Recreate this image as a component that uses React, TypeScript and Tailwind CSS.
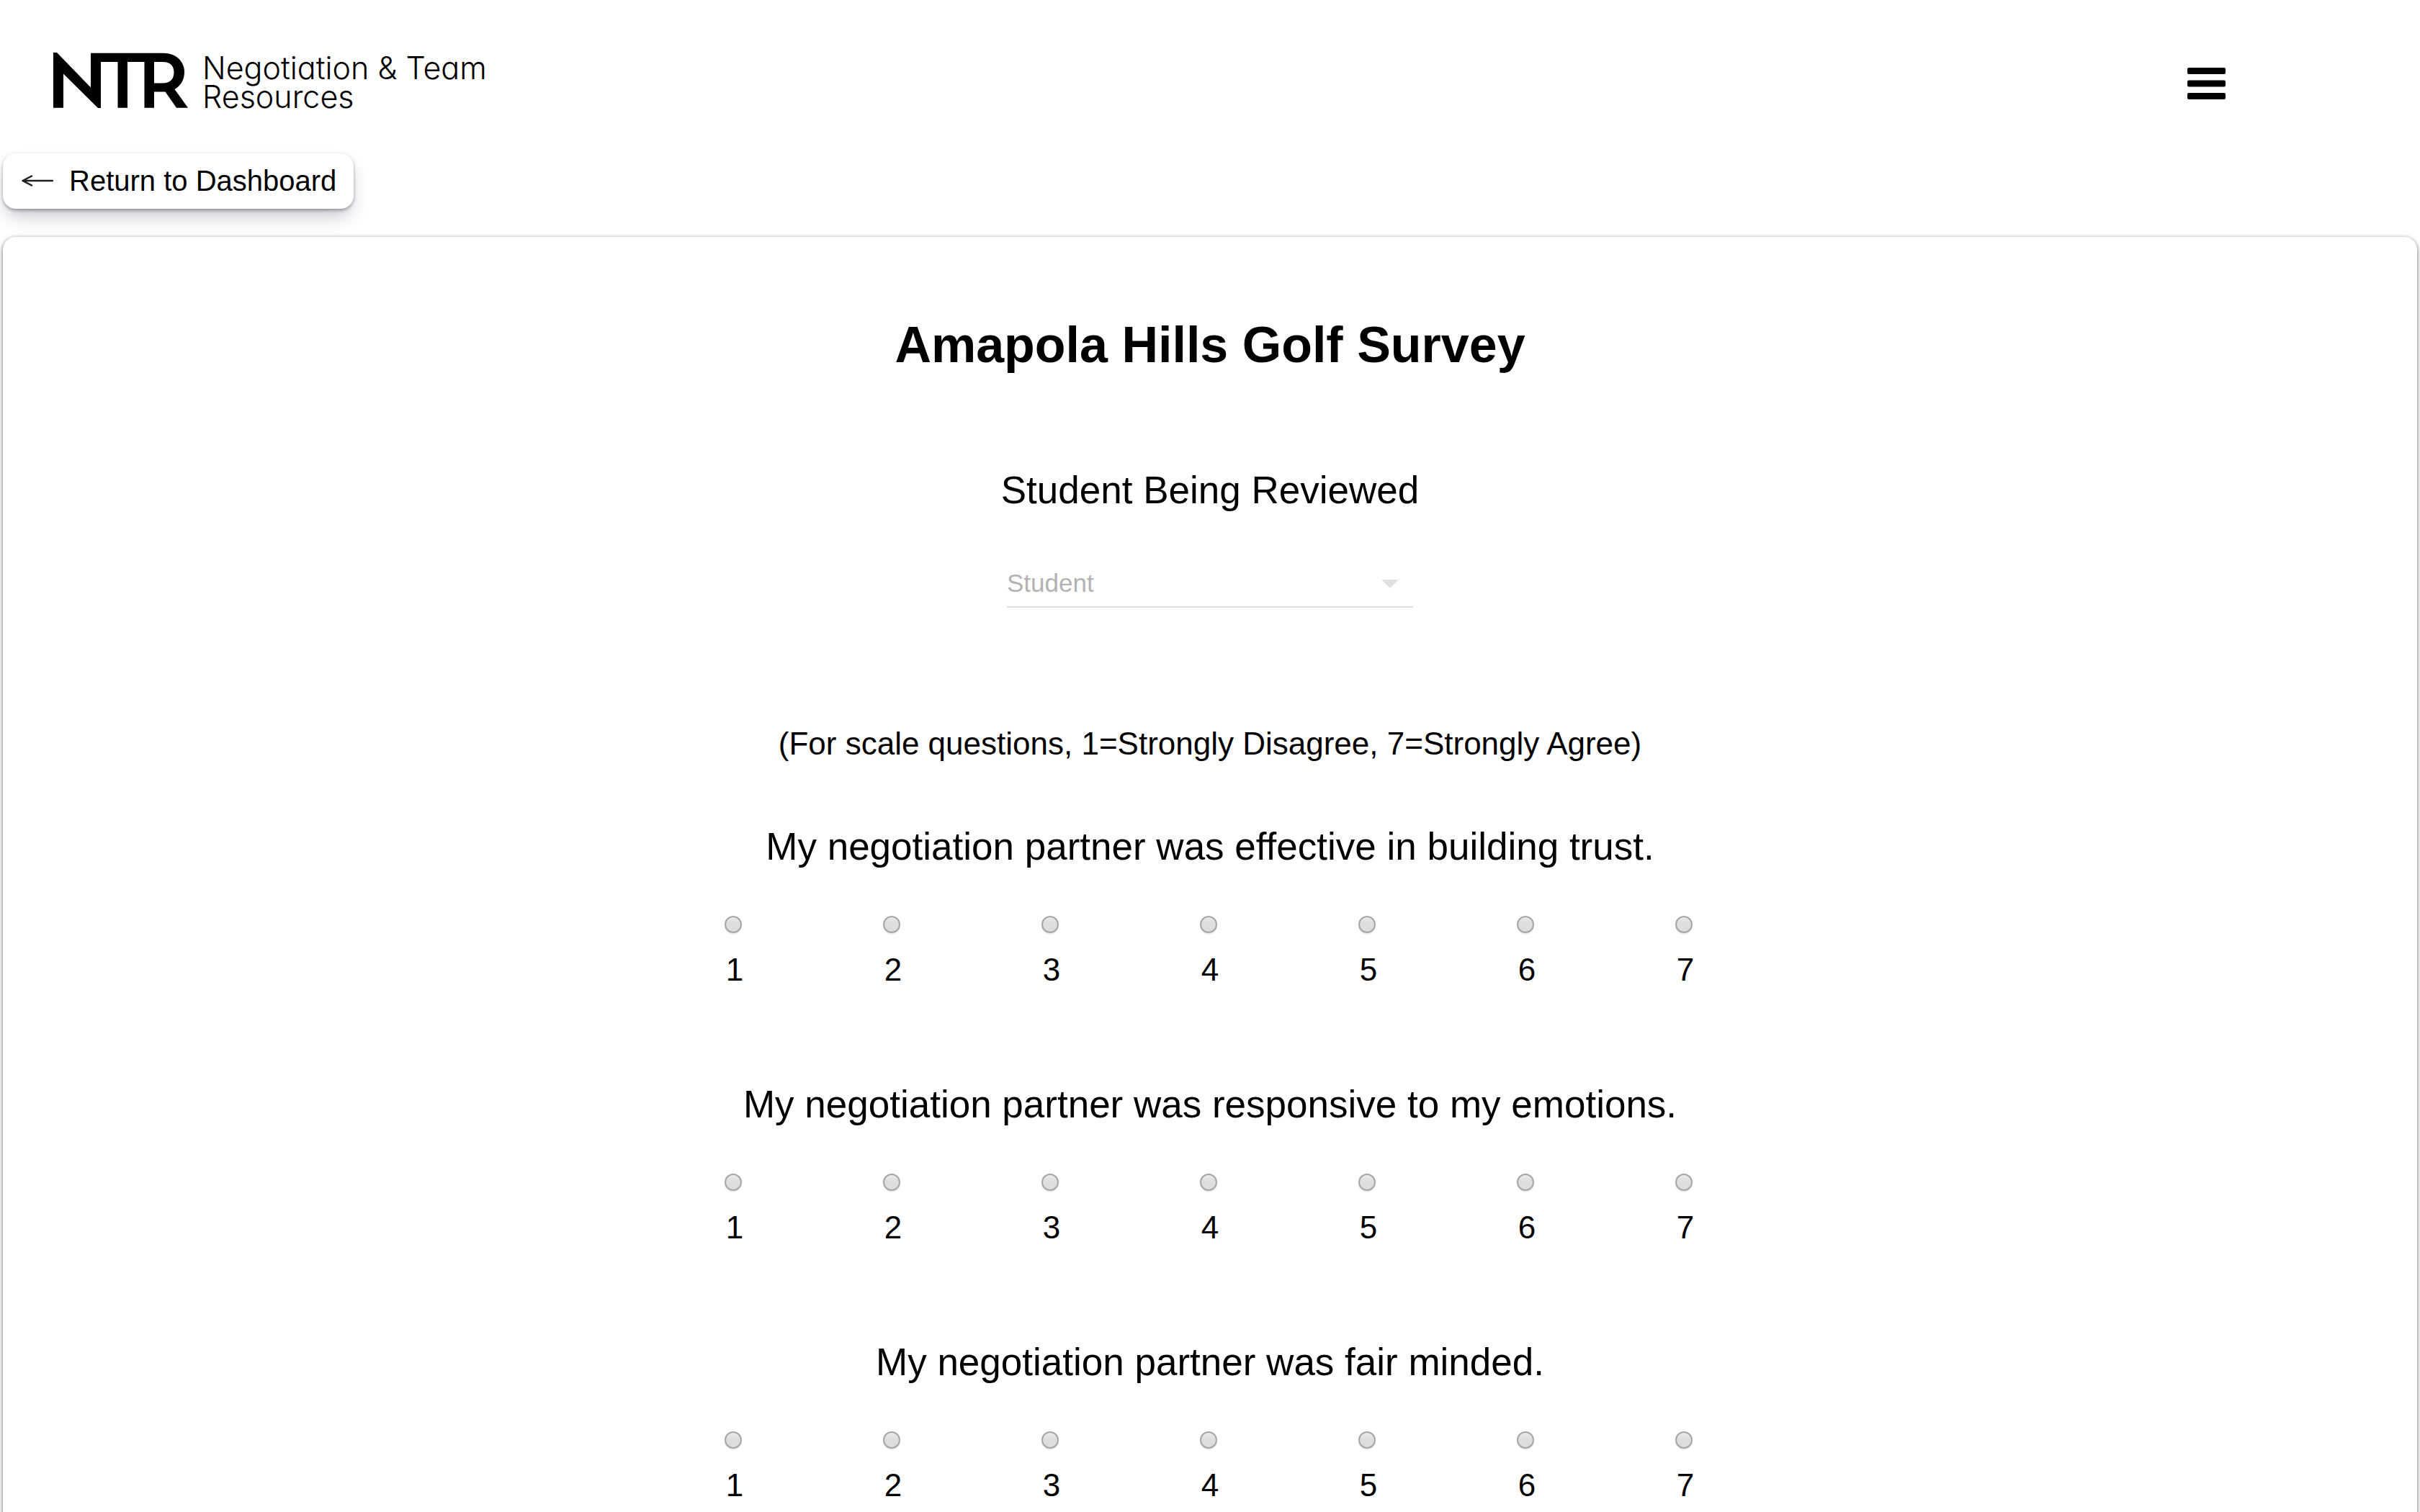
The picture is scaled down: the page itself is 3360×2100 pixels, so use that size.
import React, { useState } from "react";

const questions = [
  "My negotiation partner was effective in building trust.",
  "My negotiation partner was responsive to my emotions.",
  "My negotiation partner was fair minded.",
];

const scale = [1, 2, 3, 4, 5, 6, 7];

function Logo() {
  return (
    <a href="#home" className="flex items-start gap-5 text-black">
      <svg viewBox="0 0 187 77" className="h-[77px] w-[187px]" role="img" aria-label="NTR">
        <path
          fill="currentColor"
          fillRule="evenodd"
          d="M0 0H5L52 48.500V.7H153C170 .7 182 12 182 27C182 38 177 46 168.500 51L187 76.700H171L155.500 54.500H140V76.700H126.500V13H103V76.700H89.500V13H66V77H62L14 29.500V76.700H0ZM140 13V42.500H152C162 42.500 167.500 37 167.500 27.500C167.500 18 162 13 152 13Z"
        />
      </svg>
      <span className="pt-px font-[Inter] text-[43px] leading-10 font-light [font-feature-settings:'cv11']">
        Negotiation &amp; Team
        <br />
        Resources
      </span>
    </a>
  );
}

function Question({ id, text }: { id: string; text: string }) {
  const [value, setValue] = useState<number | null>(null);
  return (
    <fieldset className="mb-[127px] flex w-full flex-col items-center">
      <legend className="mx-auto mb-16 text-center text-[53px] leading-16">{text}</legend>
      <div className="grid w-full max-w-[1540px] grid-cols-7">
        {scale.map((n) => (
          <label key={n} className="flex cursor-pointer flex-col items-center gap-[23px]">
            <input
              type="radio"
              name={id}
              value={n}
              checked={value === n}
              onChange={() => setValue(n)}
              className="mr-1 size-6 appearance-none rounded-full border-2 border-[#a6a6a6] bg-linear-to-b from-[#ebebeb] via-[#dedede] via-40% to-[#dddddd] shadow-[0_2px_1px_#ececec] checked:bg-black"
            />
            <span className="text-[44px] leading-14">{n}</span>
          </label>
        ))}
      </div>
    </fieldset>
  );
}

export default function App() {
  return (
    <div className="min-h-screen bg-white font-['Liberation_Sans',Arial,sans-serif] text-black">
      <header className="flex h-[213px] items-start justify-between pt-[73px] pr-[270px] pl-[74px]">
        <Logo />
        <button type="button" aria-label="Menu" className="mt-[21px]">
          <svg viewBox="0 0 53 44" className="h-11 w-[53px]" fill="currentColor">
            <rect width="53" height="9" rx="2" />
            <rect y="17.500" width="53" height="9" rx="2" />
            <rect y="35" width="53" height="9" rx="2" />
          </svg>
        </button>
      </header>

      <main className="px-1">
        <a
          href="#dashboard"
          className="flex h-[77px] w-fit items-center gap-[22px] rounded-[18px] bg-white pr-6 pb-0.5 pl-[26px] text-[40px] leading-12 shadow-[0_2px_4px_rgba(45,35,66,0.4),0_14px_26px_-6px_rgba(45,35,66,0.3)]"
        >
          <svg viewBox="0 0 44 16" className="h-4 w-11" fill="none" stroke="#231f20" strokeWidth="2.500" strokeLinecap="round" strokeLinejoin="round">
            <path d="M43 8H1.500M14 1.500L1.500 8L14 14.500" />
          </svg>
          Return to Dashboard
        </a>

        <form className="mt-[39px] flex flex-col items-center rounded-[18px] bg-white px-8 pt-[110px] shadow-[0_2px_6px_rgba(0,0,0,0.6)]">
          <h1 className="text-center text-[70px] leading-20 font-bold">Amapola Hills Golf Survey</h1>

          <label htmlFor="student" className="mt-[130px] text-[53px] leading-16">
            Student Being Reviewed
          </label>
          <div className="relative mt-[76px] w-full max-w-[564px]">
            <select
              id="student"
              defaultValue=""
              className="h-[55px] w-full appearance-none border-b-2 border-[#e0e0e0] bg-transparent pb-3 text-[35px] leading-10 text-[#b3b3b3]"
            >
              <option value="">Student</option>
            </select>
            <svg viewBox="0 0 24 12" className="pointer-events-none absolute top-4 right-5 h-3 w-6" fill="#e0e0e0">
              <path d="M0 0H24L12 12Z" />
            </svg>
          </div>

          <p className="mt-[161px] mb-[83px] text-center text-[44px] leading-14">
            (For scale questions, 1=Strongly Disagree, 7=Strongly Agree)
          </p>

          {questions.map((q, i) => (
            <Question key={q} id={`question-${i + 1}`} text={q} />
          ))}
        </form>
      </main>
    </div>
  );
}
